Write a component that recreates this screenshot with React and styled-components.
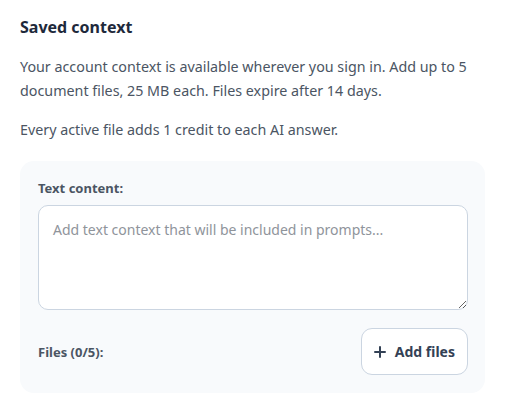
import React from 'react';
import styled, { createGlobalStyle } from 'styled-components';

const GlobalStyle = createGlobalStyle`
  body {
    margin: 0;
    background: #fff;
    font-family: "Noto Sans", "Open Sans", sans-serif;
  }
`;

const Page = styled.div`
  width: 512px;
  padding: 16px 27px 0 20px;
  box-sizing: border-box;
`;

const Title = styled.h2`
  margin: 0 0 17px;
  font-size: 16px;
  font-weight: 700;
  line-height: 22px;
  color: #1e293b;
`;

const Text = styled.p`
  margin: 0 0 15px;
  font-size: 14.3px;
  line-height: 24px;
  color: #4b5563;
`;

const Panel = styled.div`
  margin-top: 19px;
  background: #f8fafc;
  border-radius: 14px;
  padding: 18px 17px 18px 18px;
  display: flex;
  flex-direction: column;
`;

const Label = styled.label`
  font-size: 13px;
  font-weight: 700;
  line-height: 18px;
  color: #4b5563;
  margin-bottom: ${p => (p.$flush ? 0 : 8)}px;
`;

const TextArea = styled.textarea`
  box-sizing: border-box;
  height: 105px;
  width: 100%;
  resize: vertical;
  border: 1px solid #cbd5e1;
  border-radius: 10px;
  background: #fff;
  padding: 14px 14px;
  font-family: inherit;
  font-size: 14px;
  line-height: 20px;
  color: #334155;
  &::placeholder {
    color: #8f949b;
  }
`;

const FilesRow = styled.div`
  margin-top: 18px;
  display: flex;
  align-items: center;
  justify-content: space-between;
`;

const Button = styled.button`
  display: flex;
  align-items: center;
  gap: 9px;
  height: 47px;
  padding: 0 12px;
  border: 1px solid #cbd5e1;
  border-radius: 11px;
  background: #fff;
  font-family: inherit;
  font-size: 14px;
  font-weight: 700;
  color: #334155;
`;

export default function App() {
  return (
    <>
      <GlobalStyle />
      <Page>
        <Title>Saved context</Title>
        <Text>
          Your account context is available wherever you sign in. Add up to 5
          document files, 25 MB each. Files expire after 14 days.
        </Text>
        <Text>Every active file adds 1 credit to each AI answer.</Text>
        <Panel>
          <Label>Text content:</Label>
          <TextArea placeholder="Add text context that will be included in prompts..." />
          <FilesRow>
            <Label as="span" $flush>Files (0/5):</Label>
            <Button>
              <svg width="12" height="12" viewBox="0 0 12 12">
                <path d="M6 1v10M1 6h10" stroke="#334155" strokeWidth="2" strokeLinecap="round" />
              </svg>
              Add files
            </Button>
          </FilesRow>
        </Panel>
      </Page>
    </>
  );
}
